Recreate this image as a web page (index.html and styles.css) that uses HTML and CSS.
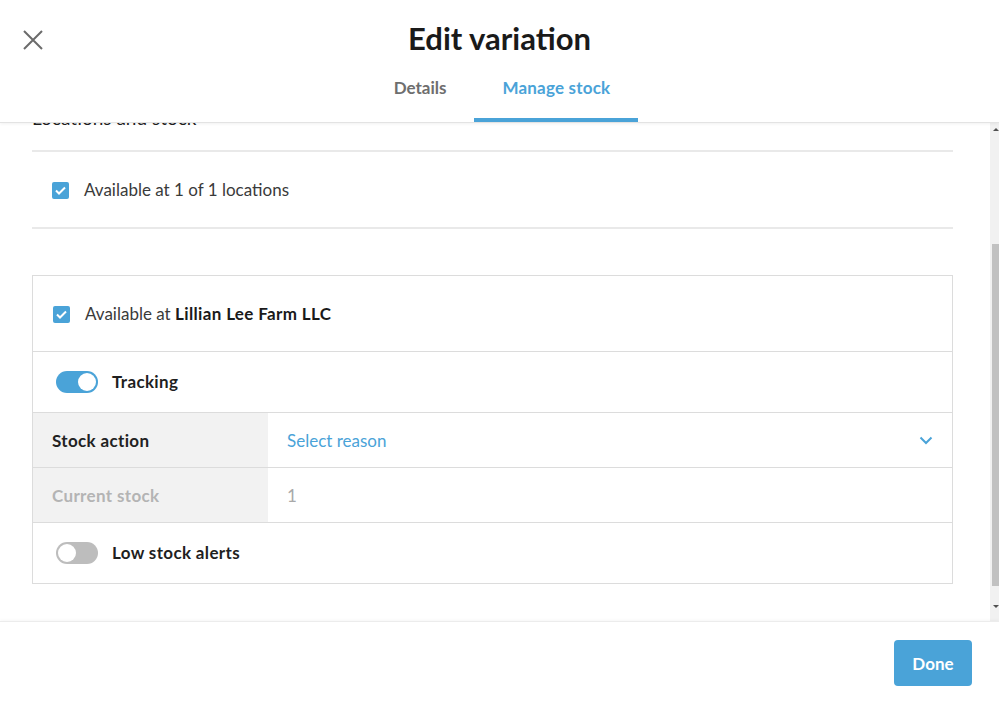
FILE: index.html
```html
<!DOCTYPE html>
<html lang="en">
<head>
  <meta charset="UTF-8">
  <title>Edit variation</title>
  <link rel="stylesheet" href="styles.css">
</head>
<body>

<header class="modal-header">
  <div class="title-bar">
    <button class="close-btn" aria-label="Close">
      <svg width="20" height="20" viewBox="0 0 20 20"><path d="M1 1 L19 19 M19 1 L1 19" stroke="#6b6b6b" stroke-width="2" fill="none"/></svg>
    </button>
    <h1>Edit variation</h1>
  </div>
  <nav class="tabs">
    <div class="tab">Details</div>
    <div class="tab active">Manage stock</div>
  </nav>
</header>

<div class="modal-body">
  <div class="content">
    <h2 class="section-title">Locations and stock</h2>

    <div class="all-locations">
      <span class="checkbox">
        <svg width="11" height="9" viewBox="0 0 11 9"><path d="M1 4.5 L4 7.5 L10 1.5" stroke="#fff" stroke-width="2" fill="none"/></svg>
      </span>
      <span>Available at 1 of 1 locations</span>
    </div>

    <div class="location-card">
      <div class="card-row available-row">
        <span class="checkbox">
          <svg width="11" height="9" viewBox="0 0 11 9"><path d="M1 4.5 L4 7.5 L10 1.5" stroke="#fff" stroke-width="2" fill="none"/></svg>
        </span>
        <span>Available at <strong>Lillian Lee Farm LLC</strong></span>
      </div>

      <div class="card-row toggle-row">
        <span class="toggle on"><span class="knob"></span></span>
        <span class="toggle-label">Tracking</span>
      </div>

      <div class="field-row">
        <div class="field-label">Stock action</div>
        <div class="field-value select">
          <span>Select reason</span>
          <svg width="14" height="9" viewBox="0 0 14 9"><path d="M1.5 1.5 L7 7 L12.5 1.5" stroke="#4aa3d8" stroke-width="2" fill="none"/></svg>
        </div>
      </div>

      <div class="field-row disabled">
        <div class="field-label">Current stock</div>
        <div class="field-value">1</div>
      </div>

      <div class="card-row toggle-row">
        <span class="toggle"><span class="knob"></span></span>
        <span class="toggle-label">Low stock alerts</span>
      </div>
    </div>
  </div>

  <div class="scrollbar">
    <span class="arrow up"></span>
    <div class="thumb"></div>
    <span class="arrow down"></span>
  </div>
</div>

<footer class="modal-footer">
  <button class="done-btn">Done</button>
</footer>

</body>
</html>
```

FILE: styles.css
```css
body {
  margin: 0;
  font-family: Lato, "Open Sans", sans-serif;
  color: #1f1f1f;
  background-color: white;
  height: 701px;
  overflow: hidden;
  display: flex;
  flex-direction: column;
}

.modal-header {
  height: 122px;
  border-bottom: 1px solid #e3e3e3;
  box-shadow: 0 1px 3px rgba(0,0,0,0.06);
  position: relative;
  z-index: 1;
  background: white;
  display: flex;
  flex-direction: column;
}

.title-bar {
  height: 80px;
  display: flex;
  align-items: center;
  justify-content: center;
  position: relative;
}

.title-bar h1 {
  margin: 0 0 2px;
  font-size: 31px;
  font-weight: 700;
  color: #1a1a1a;
}

.close-btn {
  position: absolute;
  left: 23px;
  top: 30px;
  padding: 0;
  border: none;
  background: none;
  width: 20px;
  height: 20px;
}

.tabs {
  display: flex;
  justify-content: center;
  padding-left: 5px;
  flex: 1;
}

.tab {
  padding: 0 28px 20px;
  font-size: 17px;
  font-weight: 700;
  color: #6e6e6e;
  display: flex;
  align-items: center;
  border-bottom: 4px solid transparent;
}

.tab.active {
  color: #4aa3d8;
  border-bottom-color: #4aa3d8;
  letter-spacing: 0.2px;
}

.modal-body {
  flex: 1;
  display: flex;
  overflow: hidden;
  min-height: 0;
}

.content {
  flex: 1;
  padding: 0 37px 0 32px;
  overflow: hidden;
}

.section-title {
  margin: -18px 0 0;
  font-size: 19px;
  font-weight: 400;
  line-height: 26px;
  padding-bottom: 19px;
  border-bottom: 2px solid #e9e9e9;
}

.all-locations {
  display: flex;
  align-items: center;
  gap: 15px;
  padding: 28px 0 27px 20px;
  line-height: 20px;
  font-size: 17px;
  color: #3a3a3a;
  border-bottom: 2px solid #e9e9e9;
}

.checkbox {
  width: 17px;
  height: 17px;
  border-radius: 2px;
  background-color: #4aa3d8;
  display: flex;
  align-items: center;
  justify-content: center;
  flex-shrink: 0;
}

.location-card {
  margin-top: 46px;
  border: 1px solid #dcdcdc;
}

.card-row {
  display: flex;
  align-items: center;
  line-height: 20px;
  font-size: 17px;
}

.available-row {
  padding: 28px 20px 27px;
  gap: 15px;
  color: #3a3a3a;
  border-bottom: 1px solid #dcdcdc;
}

.available-row strong {
  color: #1a1a1a;
  font-weight: 700;
  letter-spacing: 0.35px;
}

.toggle-row {
  padding: 19px 23px 19px;
  gap: 14px;
}

.toggle-label {
  font-weight: 700;
  color: #1f1f1f;
  letter-spacing: 0.35px;
}

.toggle {
  width: 42px;
  height: 22px;
  border-radius: 11px;
  background-color: #bdbdbd;
  display: flex;
  align-items: center;
  padding: 0 2px;
  box-sizing: border-box;
}

.toggle .knob {
  width: 18px;
  height: 18px;
  border-radius: 50%;
  background: white;
}

.toggle.on {
  background-color: #4aa3d8;
  justify-content: flex-end;
}

.field-row {
  display: flex;
  height: 54px;
  border-top: 1px solid #dcdcdc;
  font-size: 17px;
}

.field-row.disabled {
  border-bottom: 1px solid #dcdcdc;
}

.field-label {
  width: 235px;
  box-sizing: border-box;
  background-color: #f2f2f2;
  padding-left: 19px;
  display: flex;
  align-items: center;
  font-weight: 700;
  color: #222;
  letter-spacing: 0.35px;
}

.field-value {
  flex: 1;
  display: flex;
  align-items: center;
  justify-content: space-between;
  padding: 0 19px;
  color: #a9a9a9;
}

.field-value.select {
  color: #4aa3d8;
}

.disabled .field-label {
  color: #b4b4b4;
}

.scrollbar {
  width: 9px;
  background-color: #f1f1f1;
  display: flex;
  flex-direction: column;
  align-items: flex-end;
}

.arrow {
  width: 0;
  height: 0;
  border-left: 3px solid transparent;
  border-right: 3px solid transparent;
  margin: 5px 0;
}

.arrow.up {
  border-bottom: 3px solid #505050;
}

.arrow.down {
  border-top: 3px solid #505050;
  margin-top: 19px;
}

.thumb {
  width: 7px;
  height: 342px;
  margin-top: 108px;
  background-color: #c1c1c1;
}

.modal-footer {
  height: 80px;
  border-top: 1px solid #ececec;
  box-shadow: 0 -1px 3px rgba(0,0,0,0.04);
  display: flex;
  align-items: flex-start;
  justify-content: flex-end;
  padding: 18px 27px 0 0;
  box-sizing: border-box;
}

.done-btn {
  width: 78px;
  height: 46px;
  border: none;
  border-radius: 4px;
  background-color: #4aa3d8;
  color: white;
  font-family: Lato, sans-serif;
  font-size: 17px;
  font-weight: 700;
}
```
